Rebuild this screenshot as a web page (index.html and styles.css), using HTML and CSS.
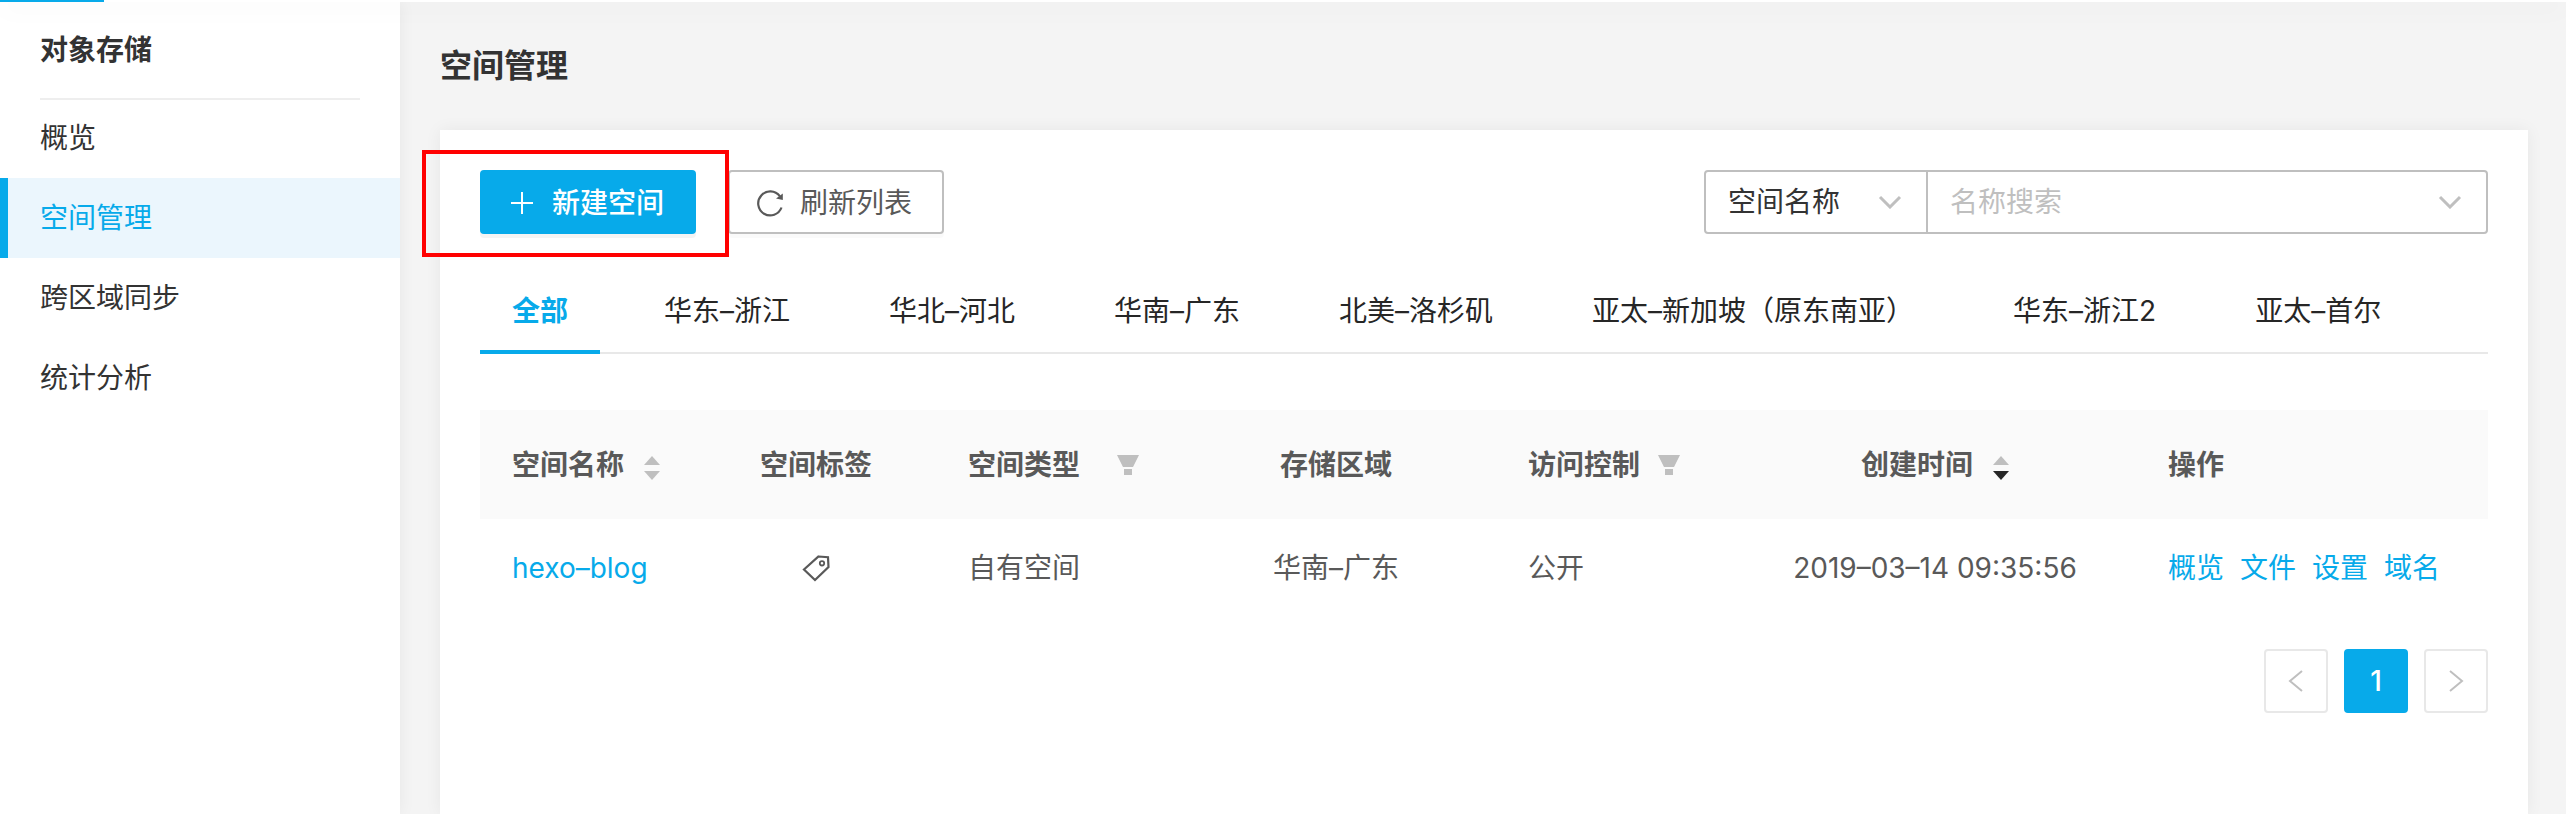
FILE: index.html
```html
<!DOCTYPE html>
<html lang="zh-CN">
<head>
<meta charset="utf-8">
<title>空间管理</title>
<link rel="stylesheet" href="styles.css">
</head>
<body>
<header class="topbar"><div class="topbar-active"></div></header>
<div class="layout">
  <aside class="sidebar">
    <h2 class="sidebar-title">对象存储</h2>
    <nav class="menu">
      <a class="menu-item" href="#">概览</a>
      <a class="menu-item active" href="#" aria-current="page">空间管理</a>
      <a class="menu-item" href="#">跨区域同步</a>
      <a class="menu-item" href="#">统计分析</a>
    </nav>
  </aside>
  <main class="main">
    <h1 class="page-title">空间管理</h1>
    <section class="card">
      <div class="toolbar">
        <div class="highlighted">
          <button class="btn primary" type="button">
            <svg class="icon" viewBox="0 0 28 28" aria-hidden="true"><path d="M14 3v22M3 14h22" fill="none" stroke="currentColor" stroke-width="2"/></svg>
            <span>新建空间</span>
          </button>
          <div class="highlight-box"></div>
        </div>
        <button class="btn" type="button">
          <svg class="icon" viewBox="0 0 28 28" aria-hidden="true"><path d="M25.5 18.500A12 12 0 1 1 23.800 7.200" fill="none" stroke="currentColor" stroke-width="2.200"/><path d="M26.800 4.500v6.500l-6.800-1.500z" fill="currentColor"/></svg>
          <span>刷新列表</span>
        </button>
        <div class="search">
          <div class="field field-kind">
            <select class="control" aria-label="搜索类型"><option>空间名称</option></select>
            <svg class="chevron" viewBox="0 0 24 14" aria-hidden="true"><path d="M2 2l10 10L22 2" fill="none" stroke="currentColor" stroke-width="3"/></svg>
          </div>
          <div class="field field-name">
            <input class="control" type="text" placeholder="名称搜索" aria-label="名称搜索">
            <svg class="chevron" viewBox="0 0 24 14" aria-hidden="true"><path d="M2 2l10 10L22 2" fill="none" stroke="currentColor" stroke-width="3"/></svg>
          </div>
        </div>
      </div>
      <div class="tabs" role="tablist">
        <button class="tab selected" role="tab" aria-selected="true">全部</button>
        <button class="tab" role="tab">华东–浙江</button>
        <button class="tab" role="tab">华北–河北</button>
        <button class="tab" role="tab">华南–广东</button>
        <button class="tab" role="tab">北美–洛杉矶</button>
        <button class="tab" role="tab">亚太–新加坡（原东南亚）</button>
        <button class="tab" role="tab">华东–浙江2</button>
        <button class="tab" role="tab">亚太–首尔</button>
      </div>
      <table class="table">
        <colgroup><col class="c-name"><col class="c-tag"><col class="c-type"><col class="c-region"><col class="c-access"><col class="c-time"><col class="c-ops"></colgroup>
        <thead>
          <tr>
            <th scope="col">空间名称<svg class="sorter" viewBox="0 0 16 26" aria-hidden="true"><path class="off" d="M8 1l8 9H0z"/><path class="off" d="M8 25l8-9H0z"/></svg></th>
            <th scope="col" class="center">空间标签</th>
            <th scope="col">空间类型<svg class="filter far" viewBox="0 0 22 20" aria-hidden="true"><path d="M0 0h22l-6 12H6zM7 14h8v6H7z"/></svg></th>
            <th scope="col" class="center">存储区域</th>
            <th scope="col">访问控制<svg class="filter" viewBox="0 0 22 20" aria-hidden="true"><path d="M0 0h22l-6 12H6zM7 14h8v6H7z"/></svg></th>
            <th scope="col" class="center">创建时间<svg class="sorter" viewBox="0 0 16 26" aria-hidden="true"><path class="off" d="M8 1l8 9H0z"/><path class="on" d="M8 25l8-9H0z"/></svg></th>
            <th scope="col">操作</th>
          </tr>
        </thead>
        <tbody>
          <tr>
            <td><a href="#">hexo–blog</a></td>
            <td class="center"><svg class="tag" viewBox="0 0 28 28" aria-hidden="true"><path d="M16.500 2.500L26 3.200 26.500 13 13 26 2 15.500z" fill="none" stroke="currentColor" stroke-width="2.200"/><circle cx="20" cy="9.300" r="2.200" fill="none" stroke="currentColor" stroke-width="1.800"/></svg></td>
            <td>自有空间</td>
            <td class="center">华南–广东</td>
            <td>公开</td>
            <td class="center">2019–03–14 09:35:56</td>
            <td><div class="ops"><a href="#">概览</a><a href="#">文件</a><a href="#">设置</a><a href="#">域名</a></div></td>
          </tr>
        </tbody>
      </table>
      <nav class="pager" aria-label="分页">
        <button class="page" type="button" aria-label="上一页"><svg viewBox="0 0 16 22" aria-hidden="true"><path d="M14 1L2 11l12 10" fill="none" stroke="currentColor" stroke-width="2"/></svg></button>
        <button class="page current" type="button" aria-current="page">1</button>
        <button class="page" type="button" aria-label="下一页"><svg viewBox="0 0 16 22" aria-hidden="true"><path d="M2 1l12 10L2 21" fill="none" stroke="currentColor" stroke-width="2"/></svg></button>
      </nav>
    </section>
  </main>
</div>
</body>
</html>
```
FILE: styles.css
```css
* { box-sizing: border-box; }
body {
  margin: 0;
  min-height: 100vh;
  display: flex;
  flex-direction: column;
  font: 28px/42px Inter, "Noto Sans CJK SC", sans-serif;
  color: #333;
  background: #f4f4f4;
}
a { color: #07aaea; text-decoration: none; }
button, input, select { font: inherit; color: inherit; }
h1, h2 { margin: 0; font-weight: 700; }

.topbar {
  height: 2px;
  background: #fff;
  position: relative;
  z-index: 2;
  box-shadow: 0 4px 24px rgba(0, 0, 0, .15);
}
.topbar-active { width: 104px; height: 2px; background: #07aaea; }

.layout { flex: 1; display: flex; }
.sidebar {
  width: 400px;
  flex: none;
  background: #fff;
  box-shadow: 0 0 16px rgba(0, 0, 0, .06);
}
.sidebar-title {
  margin: 0 40px;
  height: 98px;
  border-bottom: 2px solid #eee;
  font-size: 28px;
  line-height: 96px;
}
.menu { display: flex; flex-direction: column; }
.menu-item { height: 80px; padding-left: 40px; line-height: 80px; color: #333; }
.menu-item:first-child { height: 78px; line-height: 76px; }
.menu-item.active {
  padding-left: 32px;
  border-left: 8px solid #07aaea;
  background: #ebf6fd;
  color: #07aaea;
}

.main { flex: 1; padding: 0 38px 0 40px; display: flex; flex-direction: column; }
.page-title { height: 128px; font-size: 32px; line-height: 128px; }
.card {
  flex: 1;
  padding: 40px;
  background: #fff;
  box-shadow: 0 0 16px rgba(0, 0, 0, .06);
}

.toolbar { display: flex; gap: 32px; }
.highlighted { position: relative; z-index: 1; }
.highlight-box {
  position: absolute;
  inset: -20px -33px -23px -58px;
  border: 4px solid #f00;
  pointer-events: none;
}
.btn {
  width: 216px;
  height: 64px;
  padding: 2px 4px 0 0;
  display: flex;
  align-items: center;
  justify-content: center;
  gap: 16px;
  border: 2px solid #bfbfbf;
  border-radius: 4px;
  background: #fff;
  color: #595959;
  box-shadow: 0 4px 0 rgba(0, 0, 0, .02);
}
.btn.primary {
  border-color: #07aaea;
  background: #07aaea;
  color: #fff;
  font-weight: 500;
  box-shadow: 0 4px 0 rgba(0, 0, 0, .045);
}
.icon { width: 28px; height: 28px; }

.search {
  width: 784px;
  height: 64px;
  margin-left: auto;
  display: flex;
  border: 2px solid #bfbfbf;
  border-radius: 4px;
}
.field { display: flex; position: relative; }
.field-kind { width: 222px; border-right: 2px solid #bfbfbf; }
.field-name { flex: 1; }
.control {
  width: 100%;
  padding: 0 60px 0 22px;
  border: 0;
  outline: 0;
  background: none;
  appearance: none;
}
.control::placeholder { color: #bfbfbf; opacity: 1; }
.chevron {
  position: absolute;
  right: 24px;
  top: 23px;
  width: 24px;
  height: 14px;
  color: #bfbfbf;
  pointer-events: none;
}

.tabs { margin-top: 36px; display: flex; gap: 32px; border-bottom: 2px solid #e8e8e8; }
.tab {
  height: 84px;
  margin-bottom: -2px;
  padding: 2px 35px 0 32px;
  border: 0;
  border-bottom: 4px solid transparent;
  background: none;
  color: #262626;
  white-space: nowrap;
}
.tab.selected { padding-right: 32px; border-color: #07aaea; color: #07aaea; font-weight: 700; }

.table {
  width: 100%;
  margin-top: 56px;
  table-layout: fixed;
  border-collapse: collapse;
  color: #595959;
}
th, td { padding: 0 32px; text-align: left; white-space: nowrap; }
th { height: 109px; background: #fafafa; font-weight: 700; }
td { height: 98px; }
.center { padding: 0; text-align: center; }
.c-name { width: 216px; }
.c-tag { width: 240px; }
.c-type { width: 240px; }
.c-region { width: 320px; }
.c-access { width: 238px; }
.c-time { width: 402px; }
.sorter { width: 16px; height: 26px; margin-left: 20px; vertical-align: -6px; }
.off, .filter { fill: #bfbfbf; }
.on { fill: #262626; }
.filter { width: 22px; height: 20px; margin-left: 18px; }
.filter.far { margin-left: 37px; }
.tag { display: block; width: 28px; height: 28px; margin: 0 auto; }
.ops { display: flex; gap: 16px; }

.pager { margin-top: 32px; display: flex; justify-content: flex-end; gap: 16px; }
.page {
  width: 64px;
  height: 64px;
  padding: 0;
  display: flex;
  align-items: center;
  justify-content: center;
  border: 2px solid #e8e8e8;
  border-radius: 4px;
  background: #fff;
  color: #bfbfbf;
}
.page svg { width: 16px; height: 22px; }
.page.current { border-color: #07aaea; background: #07aaea; color: #fff; font-weight: 500; }
```
